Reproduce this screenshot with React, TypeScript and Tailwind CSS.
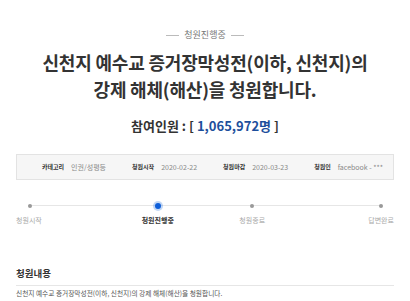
import React from 'react'

const font = { fontFamily: '"Noto Sans CJK KR", "Noto Sans", sans-serif' }

const info = [
  { label: '카테고리', value: '인권/성평등' },
  { label: '청원시작', value: '2020-02-22' },
  { label: '청원마감', value: '2020-03-23' },
  { label: '청원인', value: 'facebook - ***' },
]

const steps = ['청원시작', '청원진행중', '청원종료', '답변완료']

export default function App() {
  return (
    <div className="w-[410px] h-[301px] bg-white overflow-hidden text-[#333]" style={font}>
      <div className="px-4 pt-[29px]">
        <div className="flex items-center justify-center gap-[5px] text-[9px] leading-[12px] text-[#777]">
          <span className="w-[13px] h-px bg-[#bbb]" />
          <span>청원진행중</span>
          <span className="w-[13px] h-px bg-[#bbb]" />
        </div>
        <h1 className="mt-[8px] text-center text-[18px] leading-[27px] font-bold text-[#333] tracking-[-0.2px]">
          신천지 예수교 증거장막성전(이하, 신천지)의
          <br />
          강제 해체(해산)을 청원합니다.
        </h1>
        <div className="mt-[15px] text-center text-[13px] leading-[16px] font-bold text-[#333]">
          참여인원 : [ <span className="text-[#1d4f9c]">1,065,972명</span> ]
        </div>
        <div className="mt-[20px] h-[26px] border border-[#e3e3e3] bg-[#f6f6f6] flex items-center pl-[25px] gap-[26px]">
          {info.map((i) => (
            <div key={i.label} className="flex gap-[7px] items-center leading-[8px]">
              <span className="font-bold text-[6px] text-[#333]">{i.label}</span>
              <span className="text-[7px] text-[#888]">{i.value}</span>
            </div>
          ))}
        </div>
        <div className="mt-[21px] relative">
          <div className="absolute left-[12px] right-[13px] top-[4px] h-px bg-[#e6e6e6]" />
          <div className="relative grid grid-cols-4">
            {steps.map((s, idx) => {
              const active = idx === 1
              const align =
                idx === 0 ? 'items-start' : idx === 3 ? 'items-end' : 'items-center'
              return (
                <div key={s} className={`flex flex-col ${align}`}>
                  <div className="h-[9px] flex items-center justify-center w-[27px]">
                    {active ? (
                      <span className="w-[6px] h-[6px] rounded-full bg-[#0d5ed9] shadow-[0_0_0_2px_rgba(13,94,217,0.25)]" />
                    ) : (
                      <span className="w-[4px] h-[4px] rounded-full bg-[#999]" />
                    )}
                  </div>
                  <span
                    className={`mt-[6px] text-[7px] leading-[9px] ${
                      active ? 'font-bold text-[#333]' : 'text-[#aaa]'
                    }`}
                  >
                    {s}
                  </span>
                </div>
              )
            })}
          </div>
        </div>
        <div className="mt-[42px] text-[9.5px] leading-[12px] font-bold text-[#333]">청원내용</div>
        <div className="mt-[6px] h-px bg-[#e6e6e6]" />
        <p className="mt-[3px] text-[6.7px] leading-[9px] text-[#555]">
          신천지 예수교 증거장막성전(이하, 신천지)의 강제 해체(해산)을 청원합니다.
        </p>
      </div>
    </div>
  )
}
